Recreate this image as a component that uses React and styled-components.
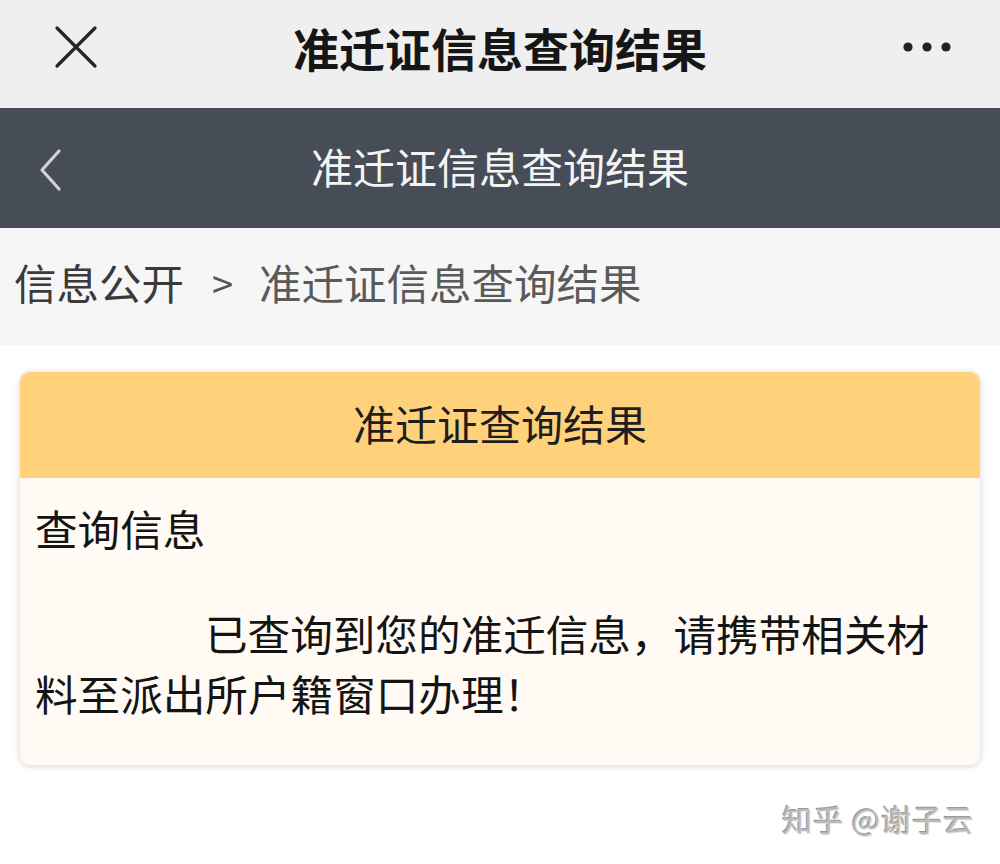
import React from "react";
import styled, { createGlobalStyle } from "styled-components";

const Global = createGlobalStyle`
  html, body { margin: 0; padding: 0; background: #ffffff; }
  body { font-family: "Noto Sans CJK SC", "Noto Sans", sans-serif; }
  * { box-sizing: border-box; }
`;

const Page = styled.div`
  width: 1000px;
  height: 864px;
  display: flex;
  flex-direction: column;
  background: #ffffff;
  overflow: hidden;
`;

const TopBar = styled.div`
  height: 108px;
  background: #efefef;
  display: grid;
  grid-template-columns: 150px 1fr 150px;
  align-items: center;
`;

const TopTitle = styled.div`
  text-align: center;
  font-size: 46px;
  font-weight: 700;
  color: #161616;
  line-height: 1;
  padding-bottom: 14px;
`;

const IconCell = styled.div`
  display: flex;
  align-items: center;
  justify-content: ${(p) => p.$align || "flex-start"};
  padding: ${(p) => p.$pad || "0"};
`;

const NavBar = styled.div`
  height: 120px;
  background: #474d56;
  display: grid;
  grid-template-columns: 150px 1fr 150px;
  align-items: center;
`;

const NavTitle = styled.div`
  text-align: center;
  font-size: 42px;
  color: #f4f4f4;
  line-height: 1;
  padding-bottom: 4px;
`;

const Crumbs = styled.div`
  height: 117px;
  background: #f6f6f6;
  display: flex;
  align-items: center;
  padding-left: 14px;
  font-size: 42.5px;
  line-height: 1;
  padding-bottom: 8px;
`;

const Crumb = styled.span`
  color: ${(p) => p.$color};
`;

const Sep = styled.span`
  color: #555;
  font-size: 38px;
  margin: 0 26px 0 28px;
`;

const Content = styled.div`
  padding: 27px 20px 0 20px;
  flex: 1;
  position: relative;
`;

const Card = styled.div`
  border-radius: 10px;
  overflow: hidden;
  box-shadow: 0 1px 7px rgba(0, 0, 0, 0.18);
  background: #fffaf3;
`;

const CardHead = styled.div`
  height: 106px;
  background: #fed17a;
  display: flex;
  align-items: center;
  justify-content: center;
  font-size: 42px;
  color: #1e1e1e;
  line-height: 1;
  padding-bottom: 4px;
`;

const CardBody = styled.div`
  padding: 25px 50px 42px 15px;
  color: #141414;
  font-size: 42.6px;
`;

const Label = styled.div`
  line-height: 50px;
  margin-bottom: 50px;
`;

const Para = styled.p`
  margin: 0;
  line-height: 60px;
  text-indent: 170px;
`;

const Watermark = styled.div`
  position: absolute;
  right: 26px;
  bottom: 24px;
  font-size: 30px;
  color: #b9b9b9;
  text-shadow: 1px 1px 0 #e8e8e8, -1px -1px 0 #9a9a9a;
  letter-spacing: 1px;
`;

const CloseIcon = () => (
  <svg width="44" height="44" viewBox="0 0 44 44">
    <path d="M3 3 L41 41 M41 3 L3 41" stroke="#262626" strokeWidth="3.2" strokeLinecap="round" />
  </svg>
);

const MoreIcon = () => (
  <svg width="50" height="12" viewBox="0 0 50 12">
    <circle cx="6" cy="6" r="4.6" fill="#222" />
    <circle cx="25" cy="6" r="4.6" fill="#222" />
    <circle cx="44" cy="6" r="4.6" fill="#222" />
  </svg>
);

const BackIcon = () => (
  <svg width="26" height="44" viewBox="0 0 26 44">
    <path d="M21 3 L4 22 L21 41" stroke="#d2d2d2" strokeWidth="3.2" fill="none" strokeLinecap="round" strokeLinejoin="round" />
  </svg>
);

export default function App() {
  return (
    <>
      <Global />
      <Page>
        <TopBar>
          <IconCell $pad="0 0 14px 54px"><CloseIcon /></IconCell>
          <TopTitle>准迁证信息查询结果</TopTitle>
          <IconCell $align="flex-end" $pad="0 48px 14px 0"><MoreIcon /></IconCell>
        </TopBar>
        <NavBar>
          <IconCell $pad="4px 0 0 38px"><BackIcon /></IconCell>
          <NavTitle>准迁证信息查询结果</NavTitle>
          <div />
        </NavBar>
        <Crumbs>
          <Crumb $color="#3a3a3a">信息公开</Crumb>
          <Sep>&gt;</Sep>
          <Crumb $color="#5a5a5a">准迁证信息查询结果</Crumb>
        </Crumbs>
        <Content>
          <Card>
            <CardHead>准迁证查询结果</CardHead>
            <CardBody>
              <Label>查询信息</Label>
              <Para>已查询到您的准迁信息，请携带相关材料至派出所户籍窗口办理！</Para>
            </CardBody>
          </Card>
          <Watermark>知乎 @谢子云</Watermark>
        </Content>
      </Page>
    </>
  );
}
